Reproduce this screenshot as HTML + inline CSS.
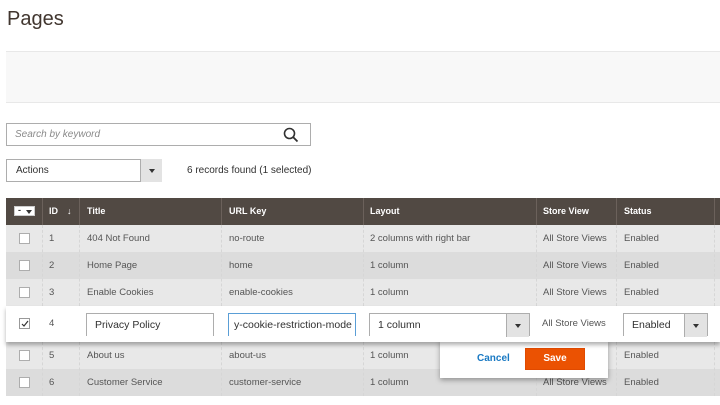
<!DOCTYPE html>
<html><head><style>
*{box-sizing:border-box;margin:0;padding:0}
body{width:720px;height:405px;overflow:hidden;background:#fff;font-family:"Liberation Sans",sans-serif;color:#303030;position:relative}
.a{position:absolute}
.hd{background:#514943;color:#fff;font-weight:bold;font-size:9px;top:198px;height:27px;line-height:27px}
.c{font-size:9.5px;color:#555;line-height:27px}
.vl{position:absolute;width:1px;border-left:1px dashed #d6d6d6}
.cb{position:absolute;width:11px;height:11px;background:#fff;border:1px solid #adadad;left:19px}
.inp{position:absolute;background:#fff;border:1px solid #adadad;border-bottom:none;font-size:10.5px;color:#303030;padding-left:8px;line-height:22px;height:23px;top:313px}
.btn{position:absolute;top:0;right:0;width:23px;height:23px;background:#e3e3e3;border-left:1px solid #adadad}
.btn:after{content:"";position:absolute;left:8px;top:10px;border:3px solid transparent;border-top:4px solid #333}
</style></head><body>
<div class="a" style="left:7px;top:8px;font-size:20px;color:#41362f">Pages</div>
<div class="a" style="left:6px;top:51px;width:714px;height:52px;background:#f8f8f8;border-top:1px solid #e8e8e8;border-bottom:1px solid #e8e8e8"></div>
<div class="a" style="left:6px;top:123px;width:305px;height:23px;border:1px solid #adadad;font-size:10px;font-style:italic;color:#8a8a8a;padding-left:8px;line-height:21px">Search by keyword
<svg class="a" style="left:276px;top:3px" width="16" height="16" viewBox="0 0 16 16"><circle cx="6.5" cy="6.5" r="5" fill="none" stroke="#303030" stroke-width="1.6"/><path d="M10 10l4.5 4.5" stroke="#303030" stroke-width="1.8"/></svg></div>
<div class="a" style="left:6px;top:159px;width:156px;height:23px;border:1px solid #adadad;font-size:10px;color:#303030;padding-left:9px;line-height:22px">Actions<div class="btn" style="top:-1px;right:-1px;height:23px;width:22px"></div></div>
<div class="a" style="left:187px;top:165px;font-size:10px;color:#303030">6 records found (1 selected)</div>

<div class="a hd" style="left:6px;width:714px"></div>
<div class="a" style="left:14px;top:206px;width:21px;height:10px;background:#fff;border:1px solid #ccc"><span style="position:absolute;left:3px;top:-2px;font-size:9px;color:#333;font-weight:bold">-</span><span style="position:absolute;left:11px;top:3px;border:3px solid transparent;border-top:4px solid #333"></span></div>
<div class="a hd" style="left:49px;background:none">ID</div>
<div class="a hd" style="left:67px;background:none;font-weight:normal">↓</div>
<div class="a hd" style="left:87px;background:none">Title</div>
<div class="a hd" style="left:229px;background:none">URL Key</div>
<div class="a hd" style="left:370px;background:none">Layout</div>
<div class="a hd" style="left:543px;background:none">Store View</div>
<div class="a hd" style="left:624px;background:none">Status</div>
<div class="a" style="left:42px;top:198px;width:1px;height:27px;background:#6b615b"></div>
<div class="a" style="left:79px;top:198px;width:1px;height:27px;background:#6b615b"></div>
<div class="a" style="left:221px;top:198px;width:1px;height:27px;background:#6b615b"></div>
<div class="a" style="left:363px;top:198px;width:1px;height:27px;background:#6b615b"></div>
<div class="a" style="left:536px;top:198px;width:1px;height:27px;background:#6b615b"></div>
<div class="a" style="left:616px;top:198px;width:1px;height:27px;background:#6b615b"></div>
<div class="a" style="left:714px;top:198px;width:1px;height:27px;background:#6b615b"></div>

<div class="a" style="left:6px;top:225px;width:714px;height:27px;background:#e8e8e8"></div>
<div class="a" style="left:6px;top:252px;width:714px;height:27px;background:#dcdcdc"></div>
<div class="a" style="left:6px;top:279px;width:714px;height:27px;background:#e8e8e8"></div>
<div class="a" style="left:6px;top:342px;width:714px;height:27px;background:#e8e8e8"></div>
<div class="a" style="left:6px;top:369px;width:714px;height:27px;background:#dcdcdc"></div>
<div class="vl" style="left:42px;top:225px;height:81px"></div><div class="vl" style="left:79px;top:225px;height:81px"></div><div class="vl" style="left:221px;top:225px;height:81px"></div><div class="vl" style="left:363px;top:225px;height:81px"></div><div class="vl" style="left:536px;top:225px;height:81px"></div><div class="vl" style="left:616px;top:225px;height:81px"></div><div class="vl" style="left:714px;top:225px;height:81px"></div>
<div class="vl" style="left:42px;top:342px;height:54px"></div><div class="vl" style="left:79px;top:342px;height:54px"></div><div class="vl" style="left:221px;top:342px;height:54px"></div><div class="vl" style="left:363px;top:342px;height:54px"></div><div class="vl" style="left:536px;top:342px;height:54px"></div><div class="vl" style="left:616px;top:342px;height:54px"></div><div class="vl" style="left:714px;top:342px;height:54px"></div>

<div class="cb" style="top:233px"></div><div class="a c" style="left:49px;top:225px">1</div><div class="a c" style="left:87px;top:225px">404 Not Found</div><div class="a c" style="left:229px;top:225px">no-route</div><div class="a c" style="left:370px;top:225px">2 columns with right bar</div><div class="a c" style="left:543px;top:225px">All Store Views</div><div class="a c" style="left:624px;top:225px">Enabled</div>
<div class="cb" style="top:260px"></div><div class="a c" style="left:49px;top:252px">2</div><div class="a c" style="left:87px;top:252px">Home Page</div><div class="a c" style="left:229px;top:252px">home</div><div class="a c" style="left:370px;top:252px">1 column</div><div class="a c" style="left:543px;top:252px">All Store Views</div><div class="a c" style="left:624px;top:252px">Enabled</div>
<div class="cb" style="top:287px"></div><div class="a c" style="left:49px;top:279px">3</div><div class="a c" style="left:87px;top:279px">Enable Cookies</div><div class="a c" style="left:229px;top:279px">enable-cookies</div><div class="a c" style="left:370px;top:279px">1 column</div><div class="a c" style="left:543px;top:279px">All Store Views</div><div class="a c" style="left:624px;top:279px">Enabled</div>
<div class="cb" style="top:350px"></div><div class="a c" style="left:49px;top:342px">5</div><div class="a c" style="left:87px;top:342px">About us</div><div class="a c" style="left:229px;top:342px">about-us</div><div class="a c" style="left:370px;top:342px">1 column</div><div class="a c" style="left:543px;top:342px">All Store Views</div><div class="a c" style="left:624px;top:342px">Enabled</div>
<div class="cb" style="top:377px"></div><div class="a c" style="left:49px;top:369px">6</div><div class="a c" style="left:87px;top:369px">Customer Service</div><div class="a c" style="left:229px;top:369px">customer-service</div><div class="a c" style="left:370px;top:369px">1 column</div><div class="a c" style="left:543px;top:369px">All Store Views</div><div class="a c" style="left:624px;top:369px">Enabled</div>

<div class="a" style="left:440px;top:340px;width:168px;height:38px;background:#fff;box-shadow:0 2px 5px rgba(0,0,0,.35)"></div>
<div class="a" style="left:477px;top:353px;font-size:10px;font-weight:bold;color:#1979c3">Cancel</div>
<div class="a" style="left:525px;top:348px;width:60px;height:22px;background:#eb5202;border:1px solid #e04a00;color:#fff;font-size:10px;font-weight:bold;text-align:center;line-height:20px">Save</div>

<div class="a" style="left:6px;top:306px;width:714px;height:36px;background:#fff;box-shadow:0 3px 4px rgba(0,0,0,.3)"></div>
<div class="cb" style="top:318px;border-color:#999"><svg class="a" style="left:1px;top:1px" width="8" height="8" viewBox="0 0 8 8"><path d="M1 4l2 2 4-5" fill="none" stroke="#333" stroke-width="1.2"/></svg></div>
<div class="a c" style="left:49px;top:310px">4</div>
<div class="inp" style="left:86px;width:128px">Privacy Policy</div>
<div class="inp" style="left:228px;width:128px;border-color:#5a9ed6;padding-left:5px;overflow:hidden;white-space:nowrap">y-cookie-restriction-mode</div>
<div class="inp" style="left:369px;width:161px">1 column<div class="btn"></div></div>
<div class="a c" style="left:542px;top:310px">All Store Views</div>
<div class="inp" style="left:623px;width:85px">Enabled<div class="btn"></div></div>
</body></html>
